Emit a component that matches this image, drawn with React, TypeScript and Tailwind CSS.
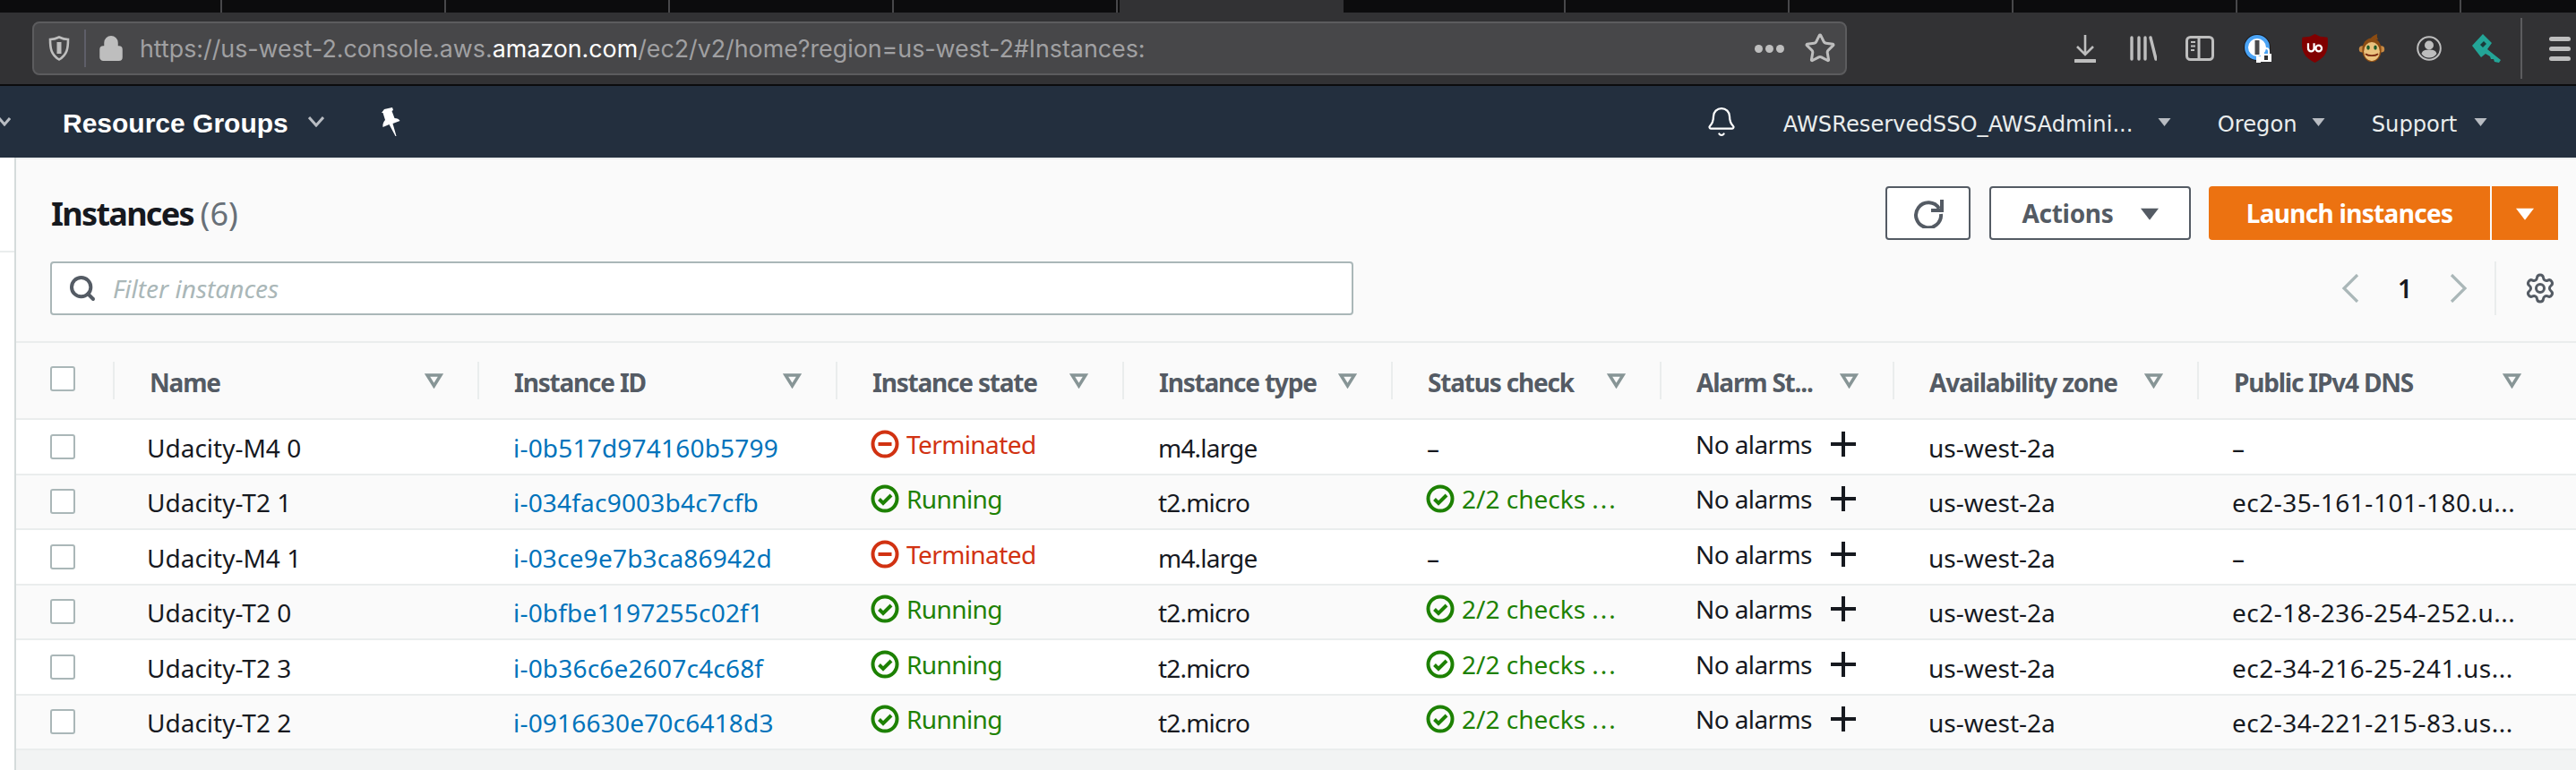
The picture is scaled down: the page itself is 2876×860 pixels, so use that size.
import React from 'react';
import { Bell, Lock, Search, Settings, Star } from 'lucide-react';

const rows = [
  { name: 'Udacity-M4 0', id: 'i-0b517d974160b5799', state: 'Terminated', type: 'm4.large', check: false, dns: '–' },
  { name: 'Udacity-T2 1', id: 'i-034fac9003b4c7cfb', state: 'Running', type: 't2.micro', check: true, dns: 'ec2-35-161-101-180.u...' },
  { name: 'Udacity-M4 1', id: 'i-03ce9e7b3ca86942d', state: 'Terminated', type: 'm4.large', check: false, dns: '–' },
  { name: 'Udacity-T2 0', id: 'i-0bfbe1197255c02f1', state: 'Running', type: 't2.micro', check: true, dns: 'ec2-18-236-254-252.u...' },
  { name: 'Udacity-T2 3', id: 'i-0b36c6e2607c4c68f', state: 'Running', type: 't2.micro', check: true, dns: 'ec2-34-216-25-241.us...' },
  { name: 'Udacity-T2 2', id: 'i-0916630e70c6418d3', state: 'Running', type: 't2.micro', check: true, dns: 'ec2-34-221-215-83.us...' },
];

const columns = ['Name', 'Instance ID', 'Instance state', 'Instance type', 'Status check', 'Alarm St...', 'Availability zone', 'Public IPv4 DNS'];

const tabs = [0, 1, 2, 3, 4, 5, 6, 7, 8, 9, 10];

const CheckIcon = ({ className }: { className?: string }) => (
  <svg viewBox="0 0 32 32" className={className} fill="none" stroke="currentColor">
    <circle cx="16" cy="16" r="13.5" strokeWidth="4" />
    <path d="M9.5 16.5l4.5 4.5 9-9" strokeWidth="4" />
  </svg>
);

const MinusIcon = ({ className }: { className?: string }) => (
  <svg viewBox="0 0 32 32" className={className} fill="none" stroke="currentColor">
    <circle cx="16" cy="16" r="13.5" strokeWidth="4" />
    <path d="M8.5 16h15" strokeWidth="4" />
  </svg>
);

const Caret = ({ className }: { className?: string }) => (
  <svg viewBox="0 0 14 10" className={className} fill="currentColor">
    <path d="M0 1h14L7 10z" />
  </svg>
);

const FilterCaret = () => (
  <svg viewBox="0 0 20 17" className="w-[21px] h-[17px] text-[#879596]" fill="none" stroke="currentColor" strokeWidth="3.5">
    <path d="M2.5 2h15L10 14z" />
  </svg>
);

const Checkbox = () => <div className="w-[28px] h-[28px] bg-white border-2 border-[#aab7b8] rounded-[3px]" />;

const ToolbarIcons = () => (
  <div className="flex items-center h-full">
    {/* downloads */}
    <svg viewBox="0 0 24 32" className="w-[24px] h-[32px] ml-[0px]" fill="none" stroke="#bebebe" strokeWidth="2.6">
      <path d="M12 1v21M3 14l9 9 9-9" />
      <path d="M1 30h22" strokeWidth="4" strokeLinecap="round" />
    </svg>
    {/* library */}
    <svg viewBox="0 0 30 28" className="w-[30px] h-[28px] ml-[38px]" fill="none" stroke="#bebebe" strokeWidth="3.4" strokeLinecap="round">
      <path d="M2 2v24M10 2v24M17 2v24M23 2l6 24" />
    </svg>
    {/* sidebar */}
    <svg viewBox="0 0 32 28" className="w-[32px] h-[28px] ml-[32px]" fill="none" stroke="#bebebe">
      <rect x="1.5" y="1.5" width="29" height="25" rx="4" strokeWidth="3" />
      <path d="M15 2v24" strokeWidth="3" />
      <path d="M6 7h5M6 11.5h5M6 16h4" strokeWidth="2" />
    </svg>
    {/* password manager */}
    <svg viewBox="0 0 32 32" className="w-[32px] h-[32px] ml-[33px]">
      <circle cx="15" cy="15" r="15" fill="#1a1a1c" />
      <circle cx="15" cy="15" r="12" fill="#fff" stroke="#4aa3f5" strokeWidth="4" />
      <rect x="12.5" y="7" width="5" height="16" fill="#4a4a4c" />
      <path d="M14 25h5v7h-5z" fill="#fff" />
      <path d="M19 22h12v9H19z" fill="#fff" />
      <path d="M22 22v-3a3 3 0 016 0v3" fill="none" stroke="#fff" strokeWidth="2" />
      <rect x="23" y="24" width="4" height="5" fill="#333" />
    </svg>
    {/* ublock */}
    <svg viewBox="0 0 32 34" className="w-[31px] h-[32px] ml-[32px]">
      <path d="M16 0l6 3 9 1c1 12 1 22-15 30C0 26 0 16 1 4l9-1z" fill="#800000" />
      <path d="M8 11v6a3.5 3.5 0 007 0v-6M17 17a3.5 3.5 0 107 0 3.5 3.5 0 10-7 0" fill="none" stroke="#fff" strokeWidth="2.4" />
    </svg>
    {/* monkey face */}
    <svg viewBox="0 0 32 36" className="w-[32px] h-[32px] ml-[32px]">
      <path d="M14 7c1-3 5-6 9-7-1 3 0 5 1 7z" fill="#8a4b12" />
      <circle cx="4" cy="19" r="4" fill="#c88a44" />
      <circle cx="28" cy="19" r="4" fill="#c88a44" />
      <ellipse cx="16" cy="20" rx="12" ry="15" fill="#8a4b12" />
      <ellipse cx="16" cy="22" rx="10" ry="12" fill="#eac27e" />
      <ellipse cx="11.5" cy="17" rx="2" ry="3" fill="#1f5a2a" />
      <ellipse cx="20.5" cy="17" rx="2" ry="3" fill="#1f5a2a" />
      <path d="M8 25c4 3 12 3 16 0" fill="none" stroke="#7a2a10" strokeWidth="2" />
    </svg>
    {/* profile */}
    <svg viewBox="0 0 28 28" className="w-[28px] h-[28px] ml-[34px]" fill="none">
      <circle cx="14" cy="14" r="12.8" stroke="#bebebe" strokeWidth="2" />
      <circle cx="14" cy="10.5" r="5" fill="#bebebe" />
      <path d="M5.5 20c1-4 5-4.500 8.500-4.500s7.500.5 8.500 4.500c-2 3-5 4.500-8.500 4.500s-6.500-1.500-8.500-4.500z" fill="#bebebe" />
    </svg>
    {/* key */}
    <svg viewBox="0 0 32 32" className="w-[32px] h-[32px] ml-[34px]">
      <path d="M0 13L12 0l10 10-5 7 15 12-2 3-5-1-1-3-3 0-1-3-5-3-5 4z" fill="#23a597" />
      <path d="M9 12l4-4 3 3-4 4z" fill="#1a3a3a" />
    </svg>
    <div className="w-[2px] h-[68px] bg-[#5c5c5e] ml-[22px]" />
    {/* menu */}
    <div className="flex flex-col gap-[6px] ml-[30px]">
      <div className="w-[24px] h-[5px] rounded-full bg-[#bebebe]" />
      <div className="w-[24px] h-[5px] rounded-full bg-[#bebebe]" />
      <div className="w-[24px] h-[5px] rounded-full bg-[#bebebe]" />
    </div>
  </div>
);

const App = () => {
  return (
    <div className="w-[2876px] h-[860px] overflow-hidden flex flex-col font-['Noto_Sans',sans-serif] text-[#16191f]">
      {/* Browser tabs */}
      <div className="flex h-[14px] bg-[#0c0c0d] shrink-0">
        {tabs.map((t) => (
          <div
            key={t}
            className={t === 5 ? 'w-[250px] ml-[2px] mr-[-2px] bg-[#323234]' : t === 0 ? 'w-[248px] border-r-2 border-[#48484a]' : 'w-[250px] border-r-2 border-[#48484a]'}
          />
        ))}
      </div>

      {/* Browser toolbar */}
      <div className="flex items-center h-[82px] shrink-0 bg-[#323234] border-b-2 border-[#0c0c0d]">
        <div className="flex items-center ml-[36px] w-[2026px] h-[60px] bg-[#474749] border-2 border-[#5c5c5e] rounded-[8px] font-['Inter',sans-serif] text-[26.8px] text-[#a0a0a2]">
          <svg viewBox="0 0 24 28" className="w-[24px] h-[28px] ml-[16px]" fill="none" stroke="#bebebe">
            <path d="M12 1.500c4 2 7 2.500 10 2.500 0 10-1 17-10 22.500C3 21 2 14 2 4c3 0 6-.5 10-2.500z" strokeWidth="2.600" />
            <path d="M12 7v13" strokeWidth="5" />
          </svg>
          <div className="w-[2px] h-[42px] bg-[#5e5e68] ml-[16px]" />
          <Lock className="w-[30px] h-[32px] ml-[13px] text-[#bebebe] fill-[#bebebe]" strokeWidth={2.4} />
          <div className="ml-[17px] whitespace-nowrap">
            https://us-west-2.console.aws.<span className="text-white">amazon.com</span>/ec2/v2/home?region=us-west-2#Instances:
          </div>
          <div className="ml-auto flex items-center gap-[3px]">
            <div className="w-[9px] h-[9px] rounded-full bg-[#bebebe]" />
            <div className="w-[9px] h-[9px] rounded-full bg-[#bebebe]" />
            <div className="w-[9px] h-[9px] rounded-full bg-[#bebebe]" />
          </div>
          <Star className="w-[36px] h-[36px] ml-[22px] mr-[10px] text-[#bebebe]" strokeWidth={2} />
        </div>
        <div className="ml-[254px] h-full">
          <ToolbarIcons />
        </div>
      </div>

      {/* AWS nav */}
      <div className="flex items-center h-[80px] shrink-0 bg-[#232f3e] text-white">
        <svg viewBox="0 0 14 10" className="w-[14px] h-[10px] ml-[-2px] text-[#b8bcc2]" fill="none" stroke="currentColor" strokeWidth="3">
          <path d="M1 1l6 7 6-7" />
        </svg>
        <span className="ml-[58px] pt-[3px] font-['Liberation_Sans',sans-serif] font-bold text-[30px]">Resource Groups</span>
        <svg viewBox="0 0 18 12" className="w-[18px] h-[12px] ml-[22px] text-[#b8bcc2]" fill="none" stroke="currentColor" strokeWidth="3">
          <path d="M1 1l8 9 8-9" />
        </svg>
        <svg viewBox="0 0 26 32" className="w-[26px] h-[32px] ml-[62px]" fill="white">
          <path d="M5 2l9-2 1 3-1.500 1 3 8c3 0 5 1 6 3l-8 3 4 14-1 0-7-13-7 3C3 19 4 16 6 14L3.500 6 2 6z" />
        </svg>
        <Bell className="w-[36px] h-[36px] ml-[1454px]" strokeWidth={1.5} />
        <div className="flex items-center font-['DejaVu_Sans',sans-serif] text-[24.2px] ml-[51px] text-[#eaeded]">
          <span className="pt-[6px] whitespace-nowrap w-[394px]">AWSReservedSSO_AWSAdmini...</span>
          <Caret className="w-[15px] h-[10px] ml-[24px] text-[#b8bcc2]" />
          <span className="pt-[6px] ml-[52px] w-[87px]">Oregon</span>
          <Caret className="w-[15px] h-[10px] ml-[18px] text-[#b8bcc2]" />
          <span className="pt-[6px] ml-[52px] w-[96px]">Support</span>
          <Caret className="w-[15px] h-[10px] ml-[18px] text-[#b8bcc2]" />
        </div>
      </div>

      <div className="flex flex-1 min-h-0">
        {/* Collapsed side strip */}
        <div className="w-[18px] shrink-0 bg-white border-r-2 border-[#d5dbdb]">
          <div className="h-[106px] border-b-2 border-[#eaeded]" />
        </div>

        <div className="flex-1 flex flex-col bg-[#f2f3f3]">
          {/* Header */}
          <div className="h-[207px] shrink-0 bg-[#fafafa] border-t-2 border-[#eaeded] border-b-2 pl-[38px] pr-[20px] pt-[30px]">
            <div className="flex items-center justify-between h-[60px]">
              <h1 className="pt-[2px] pl-[1px] text-[36px] font-bold tracking-[-1.7px] leading-none">
                Instances <span className="font-normal tracking-normal text-[#687078]">(6)</span>
              </h1>
              <div className="flex items-center">
                <button className="flex items-center justify-center w-[95px] h-[60px] bg-white border-2 border-[#545b64] rounded-[4px]">
                  <svg viewBox="0 0 34 34" className="w-[34px] h-[34px]" fill="none" stroke="#545b64" strokeWidth="4">
                    <path d="M29 12A14 14 0 1 0 31 18" />
                    <path d="M32 2v12H20" />
                  </svg>
                </button>
                <button className="flex items-center justify-center gap-[30px] ml-[21px] w-[225px] h-[60px] bg-white border-2 border-[#545b64] rounded-[4px] text-[28px] font-bold tracking-[-0.3px] text-[#545b64]">
                  Actions
                  <Caret className="w-[20px] h-[15px]" />
                </button>
                <button className="flex items-center justify-center ml-[20px] w-[314px] h-[60px] bg-[#ec7211] rounded-l-[4px] text-[28px] font-bold tracking-[-0.7px] text-white">
                  Launch instances
                </button>
                <button className="flex items-center justify-center ml-[2px] w-[74px] h-[60px] bg-[#ec7211] text-white">
                  <Caret className="w-[20px] h-[15px]" />
                </button>
              </div>
            </div>
            <div className="flex items-center mt-[24px] h-[60px]">
              <div className="flex items-center w-[1455px] h-[60px] bg-white border-2 border-[#aab7b8] rounded-[4px]">
                <Search className="w-[32px] h-[34px] ml-[18px] text-[#545b64]" strokeWidth={3} />
                <input
                  placeholder="Filter instances"
                  className="ml-[18px] flex-1 outline-none bg-transparent text-[28px] italic placeholder:text-[#aab7b8]"
                />
              </div>
              <svg viewBox="0 0 20 32" className="w-[20px] h-[32px] ml-[1103px]" fill="none" stroke="#aab7b8" strokeWidth="3.2">
                <path d="M18 1L3 16l15 15" />
              </svg>
              <span className="ml-[43px] text-[28px] font-semibold w-[14px]">1</span>
              <svg viewBox="0 0 20 32" className="w-[20px] h-[32px] ml-[44px]" fill="none" stroke="#aab7b8" strokeWidth="3.2">
                <path d="M2 1l15 15L2 31" />
              </svg>
              <div className="w-[2px] h-[60px] bg-[#eaeded] ml-[30px]" />
              <Settings className="w-[36px] h-[36px] ml-[31px] text-[#545b64]" strokeWidth={2} />
            </div>
          </div>

          {/* Table head */}
          <div className="grid grid-cols-[108px_407px_400px_320px_300px_300px_260px_340px_400px] items-center h-[86px] shrink-0 bg-[#fafafa] border-b-2 border-[#eaeded] text-[28px] font-bold text-[#545b64]">
            <div className="pl-[38px] pb-[4px]">
              <Checkbox />
            </div>
            {columns.map((c) => (
              <div key={c} className="flex items-center justify-between h-[42px] border-l-2 border-[#eaeded] pl-[39px] pr-[38px] whitespace-nowrap">
                <span className="pt-[4px] tracking-[-1.2px]">{c}</span>
                <FilterCaret />
              </div>
            ))}
          </div>

          {/* Rows */}
          {rows.map((r, i) => (
            <div
              key={r.id}
              className={`grid grid-cols-[108px_407px_400px_320px_300px_300px_260px_340px_400px] items-center h-[61.5px] shrink-0 border-b-2 border-[#eaeded] text-[28px] ${i % 2 === 0 ? 'bg-white' : 'bg-[#fafafa]'}`}
            >
              <div className="pl-[38px]">
                <Checkbox />
              </div>
              <div className="pl-[38px] pt-[2px] whitespace-nowrap">{r.name}</div>
              <div className="pl-[40px] pt-[2px] whitespace-nowrap tracking-[0.2px] text-[#0073bb]">{r.id}</div>
              {r.state === 'Running' ? (
                <div className="flex items-center gap-[8px] pl-[39px] pb-[6px] tracking-[-0.6px] text-[#1d8102]">
                  <CheckIcon className="w-[32px] h-[32px]" />
                  {r.state}
                </div>
              ) : (
                <div className="flex items-center gap-[8px] pl-[39px] pb-[6px] tracking-[-0.6px] text-[#d13212]">
                  <MinusIcon className="w-[32px] h-[32px]" />
                  {r.state}
                </div>
              )}
              <div className="pl-[40px] pt-[2px] tracking-[-0.8px]">{r.type}</div>
              {r.check ? (
                <div className="flex items-center gap-[8px] pl-[39px] pb-[6px] whitespace-nowrap text-[#1d8102]">
                  <CheckIcon className="w-[32px] h-[32px]" />
                  <span>2/2 checks <span className="tracking-[2px]">...</span></span>
                </div>
              ) : (
                <div className="pl-[40px] pt-[2px]">–</div>
              )}
              <div className="flex items-center pl-[40px] pb-[6px] tracking-[-0.6px] whitespace-nowrap">
                No alarms
                <svg viewBox="0 0 28 28" className="w-[28px] h-[28px] ml-[21px]" fill="none" stroke="currentColor" strokeWidth="4">
                  <path d="M14 0v28M0 14h28" />
                </svg>
              </div>
              <div className="pl-[40px] pt-[2px]">us-west-2a</div>
              <div className="pl-[39px] pt-[2px] tracking-[0.5px] whitespace-nowrap">{r.dns}</div>
            </div>
          ))}
        </div>
      </div>
    </div>
  );
};

export default App;
